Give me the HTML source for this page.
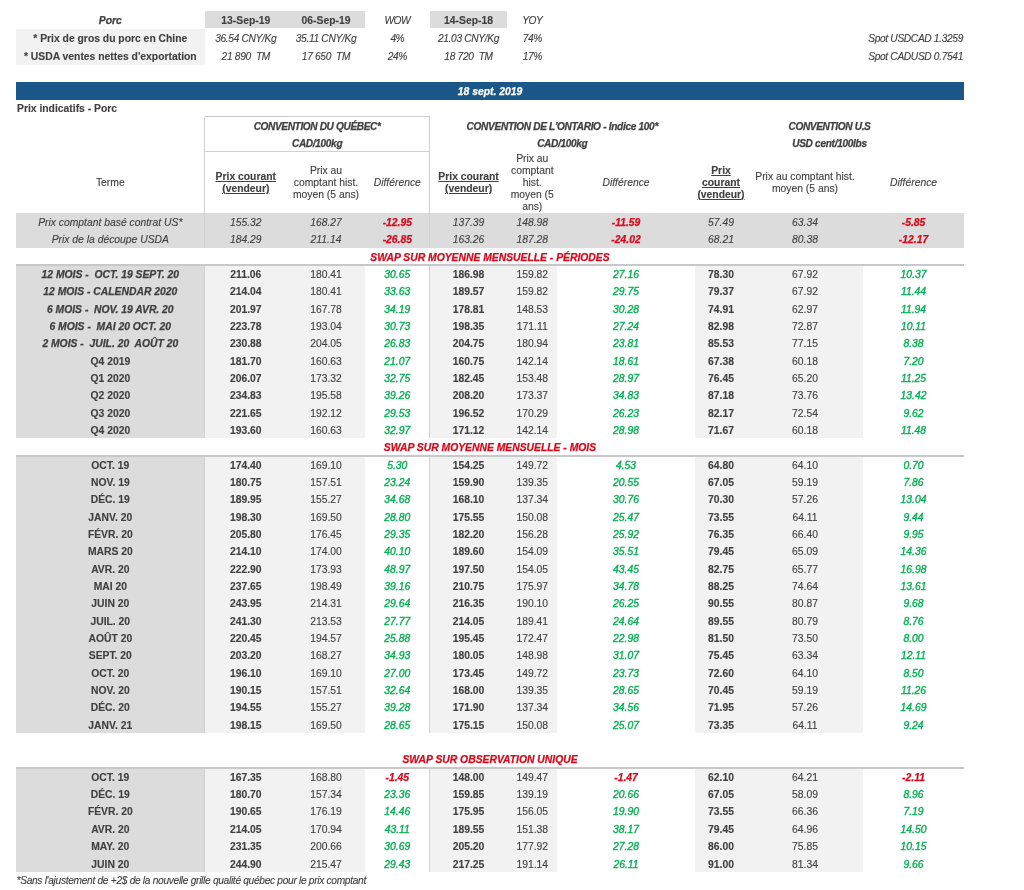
<!DOCTYPE html>
<html><head><meta charset="utf-8"><style>
html,body{margin:0;padding:0;background:#ffffff;}
body{width:1024px;height:890px;position:relative;overflow:hidden;font-family:"Liberation Sans",sans-serif;}
.t{position:absolute;line-height:14px;height:14px;white-space:pre;}
.s{-webkit-text-stroke:0.12px currentColor;}
.c{-webkit-text-stroke:0.35px currentColor;}
.bi{-webkit-text-stroke:0.25px currentColor;}
.bb{-webkit-text-stroke:0.12px currentColor;}
.r{position:absolute;}
#w{position:absolute;left:0;top:0;width:1024px;height:890px;will-change:transform;}
</style></head><body><div id="w">
<div class="r" style="left:204.60px;top:11.20px;width:160.40px;height:17.00px;background:#dcdcdc"></div>
<div class="r" style="left:429.60px;top:11.20px;width:77.90px;height:17.00px;background:#dcdcdc"></div>
<div class="r" style="left:16.00px;top:28.80px;width:188.60px;height:36.00px;background:#f2f2f2"></div>
<div class="t bi" style="left:16.00px;width:188.60px;top:13.81px;font-size:10.35px;font-weight:bold;font-style:italic;color:#404040;text-align:center;">Porc</div>
<div class="t bb" style="left:204.60px;width:82.40px;top:13.81px;font-size:10.35px;font-weight:bold;font-style:normal;color:#404040;text-align:center;">13-Sep-19</div>
<div class="t bb" style="left:287.00px;width:78.00px;top:13.81px;font-size:10.35px;font-weight:bold;font-style:normal;color:#404040;text-align:center;">06-Sep-19</div>
<div class="t s" style="left:365.00px;width:64.60px;top:13.86px;font-size:10.2px;font-weight:normal;font-style:italic;color:#404040;text-align:center;letter-spacing:-0.544px;">WOW</div>
<div class="t bb" style="left:429.60px;width:77.90px;top:13.81px;font-size:10.35px;font-weight:bold;font-style:normal;color:#404040;text-align:center;">14-Sep-18</div>
<div class="t s" style="left:507.50px;width:49.50px;top:13.86px;font-size:10.2px;font-weight:normal;font-style:italic;color:#404040;text-align:center;letter-spacing:-0.431px;">YOY</div>
<div class="t bb" style="left:16.00px;width:188.60px;top:31.81px;font-size:10.35px;font-weight:bold;font-style:normal;color:#404040;text-align:center;">* Prix de gros du porc en Chine</div>
<div class="t s" style="left:204.60px;width:82.40px;top:31.86px;font-size:10.2px;font-weight:normal;font-style:italic;color:#404040;text-align:center;letter-spacing:-0.326px;">36.54 CNY/Kg</div>
<div class="t s" style="left:287.00px;width:78.00px;top:31.86px;font-size:10.2px;font-weight:normal;font-style:italic;color:#404040;text-align:center;letter-spacing:-0.322px;">35.11 CNY/Kg</div>
<div class="t s" style="left:365.00px;width:64.60px;top:31.86px;font-size:10.2px;font-weight:normal;font-style:italic;color:#404040;text-align:center;letter-spacing:-0.442px;">4%</div>
<div class="t s" style="left:429.60px;width:77.90px;top:31.86px;font-size:10.2px;font-weight:normal;font-style:italic;color:#404040;text-align:center;letter-spacing:-0.326px;">21.03 CNY/Kg</div>
<div class="t s" style="left:507.50px;width:49.50px;top:31.86px;font-size:10.2px;font-weight:normal;font-style:italic;color:#404040;text-align:center;letter-spacing:-0.408px;">74%</div>
<div class="t s" style="left:700.00px;width:263.00px;top:31.86px;font-size:10.2px;font-weight:normal;font-style:italic;color:#404040;text-align:right;letter-spacing:-0.336px;">Spot USDCAD 1.3259</div>
<div class="t bb" style="left:6.00px;width:208.60px;top:49.81px;font-size:10.35px;font-weight:bold;font-style:normal;color:#404040;text-align:center;">* USDA ventes nettes d'exportation</div>
<div class="t s" style="left:204.60px;width:82.40px;top:49.86px;font-size:10.2px;font-weight:normal;font-style:italic;color:#404040;text-align:center;letter-spacing:-0.310px;">21 890  TM</div>
<div class="t s" style="left:287.00px;width:78.00px;top:49.86px;font-size:10.2px;font-weight:normal;font-style:italic;color:#404040;text-align:center;letter-spacing:-0.310px;">17 650  TM</div>
<div class="t s" style="left:365.00px;width:64.60px;top:49.86px;font-size:10.2px;font-weight:normal;font-style:italic;color:#404040;text-align:center;letter-spacing:-0.408px;">24%</div>
<div class="t s" style="left:429.60px;width:77.90px;top:49.86px;font-size:10.2px;font-weight:normal;font-style:italic;color:#404040;text-align:center;letter-spacing:-0.310px;">18 720  TM</div>
<div class="t s" style="left:507.50px;width:49.50px;top:49.86px;font-size:10.2px;font-weight:normal;font-style:italic;color:#404040;text-align:center;letter-spacing:-0.408px;">17%</div>
<div class="t s" style="left:700.00px;width:263.00px;top:49.86px;font-size:10.2px;font-weight:normal;font-style:italic;color:#404040;text-align:right;letter-spacing:-0.336px;">Spot CADUSD 0.7541</div>
<div class="r" style="left:16.00px;top:82.20px;width:948.00px;height:17.50px;background:#1b5789"></div>
<div class="t bi" style="left:16.00px;width:948.00px;top:84.91px;font-size:10.35px;font-weight:bold;font-style:italic;color:#ffffff;text-align:center;">18 sept. 2019</div>
<div class="t bb" style="left:17.00px;width:383.00px;top:102.11px;font-size:10.35px;font-weight:bold;font-style:normal;color:#404040;text-align:left;">Prix indicatifs - Porc</div>
<div class="t bi" style="left:204.60px;width:225.00px;top:119.80px;font-size:10.1px;font-weight:bold;font-style:italic;color:#404040;text-align:center;letter-spacing:-0.366px;">CONVENTION DU QUÉBEC*</div>
<div class="t bi" style="left:204.60px;width:225.00px;top:136.60px;font-size:10.1px;font-weight:bold;font-style:italic;color:#404040;text-align:center;letter-spacing:-0.338px;">CAD/100kg</div>
<div class="t bi" style="left:429.60px;width:265.40px;top:119.80px;font-size:10.1px;font-weight:bold;font-style:italic;color:#404040;text-align:center;letter-spacing:-0.313px;">CONVENTION DE L'ONTARIO - Indice 100*</div>
<div class="t bi" style="left:429.60px;width:265.40px;top:136.60px;font-size:10.1px;font-weight:bold;font-style:italic;color:#404040;text-align:center;letter-spacing:-0.338px;">CAD/100kg</div>
<div class="t bi" style="left:695.00px;width:269.00px;top:119.80px;font-size:10.1px;font-weight:bold;font-style:italic;color:#404040;text-align:center;letter-spacing:-0.354px;">CONVENTION U.S</div>
<div class="t bi" style="left:695.00px;width:269.00px;top:136.60px;font-size:10.1px;font-weight:bold;font-style:italic;color:#404040;text-align:center;letter-spacing:-0.301px;">USD cent/100lbs</div>
<div class="r" style="left:204.60px;top:116px;width:225.00px;height:1px;background:#d2d2d2"></div>
<div class="r" style="left:204.60px;top:116px;width:83.40px;height:1px;background:#c6c6c6"></div>
<div class="r" style="left:204.60px;top:151px;width:225.00px;height:1px;background:#d2d2d2"></div>
<div class="t s" style="left:16.00px;width:188.60px;top:176.01px;font-size:10.35px;font-weight:normal;font-style:normal;color:#404040;text-align:center;">Terme</div>
<div class="t bb" style="left:204.60px;width:82.40px;top:170.06px;font-size:10.35px;font-weight:bold;font-style:normal;color:#404040;text-align:center;text-decoration:underline;">Prix courant</div>
<div class="t bb" style="left:204.60px;width:82.40px;top:181.96px;font-size:10.35px;font-weight:bold;font-style:normal;color:#404040;text-align:center;text-decoration:underline;">(vendeur)</div>
<div class="t s" style="left:287.00px;width:78.00px;top:164.11px;font-size:10.35px;font-weight:normal;font-style:normal;color:#404040;text-align:center;">Prix au</div>
<div class="t s" style="left:287.00px;width:78.00px;top:176.01px;font-size:10.35px;font-weight:normal;font-style:normal;color:#404040;text-align:center;">comptant hist.</div>
<div class="t s" style="left:287.00px;width:78.00px;top:187.91px;font-size:10.35px;font-weight:normal;font-style:normal;color:#404040;text-align:center;">moyen (5 ans)</div>
<div class="t s" style="left:365.00px;width:64.60px;top:176.01px;font-size:10.35px;font-weight:normal;font-style:italic;color:#404040;text-align:center;">Différence</div>
<div class="t bb" style="left:429.60px;width:77.90px;top:170.06px;font-size:10.35px;font-weight:bold;font-style:normal;color:#404040;text-align:center;text-decoration:underline;">Prix courant</div>
<div class="t bb" style="left:429.60px;width:77.90px;top:181.96px;font-size:10.35px;font-weight:bold;font-style:normal;color:#404040;text-align:center;text-decoration:underline;">(vendeur)</div>
<div class="t s" style="left:507.50px;width:49.50px;top:152.21px;font-size:10.35px;font-weight:normal;font-style:normal;color:#404040;text-align:center;">Prix au</div>
<div class="t s" style="left:507.50px;width:49.50px;top:164.11px;font-size:10.35px;font-weight:normal;font-style:normal;color:#404040;text-align:center;">comptant</div>
<div class="t s" style="left:507.50px;width:49.50px;top:176.01px;font-size:10.35px;font-weight:normal;font-style:normal;color:#404040;text-align:center;">hist.</div>
<div class="t s" style="left:507.50px;width:49.50px;top:187.91px;font-size:10.35px;font-weight:normal;font-style:normal;color:#404040;text-align:center;">moyen (5</div>
<div class="t s" style="left:507.50px;width:49.50px;top:199.81px;font-size:10.35px;font-weight:normal;font-style:normal;color:#404040;text-align:center;">ans)</div>
<div class="t s" style="left:557.00px;width:138.00px;top:176.01px;font-size:10.35px;font-weight:normal;font-style:italic;color:#404040;text-align:center;">Différence</div>
<div class="t bb" style="left:695.00px;width:52.00px;top:164.11px;font-size:10.35px;font-weight:bold;font-style:normal;color:#404040;text-align:center;text-decoration:underline;">Prix</div>
<div class="t bb" style="left:695.00px;width:52.00px;top:176.01px;font-size:10.35px;font-weight:bold;font-style:normal;color:#404040;text-align:center;text-decoration:underline;">courant</div>
<div class="t bb" style="left:695.00px;width:52.00px;top:187.91px;font-size:10.35px;font-weight:bold;font-style:normal;color:#404040;text-align:center;text-decoration:underline;">(vendeur)</div>
<div class="t s" style="left:747.00px;width:116.00px;top:170.06px;font-size:10.35px;font-weight:normal;font-style:normal;color:#404040;text-align:center;">Prix au comptant hist.</div>
<div class="t s" style="left:747.00px;width:116.00px;top:181.96px;font-size:10.35px;font-weight:normal;font-style:normal;color:#404040;text-align:center;">moyen (5 ans)</div>
<div class="t s" style="left:863.00px;width:101.00px;top:176.01px;font-size:10.35px;font-weight:normal;font-style:italic;color:#404040;text-align:center;">Différence</div>
<div class="r" style="left:16.00px;top:213.40px;width:948.00px;height:34.30px;background:#dcdcdc"></div>
<div class="t s" style="left:16.00px;width:188.60px;top:216.11px;font-size:10.35px;font-weight:normal;font-style:italic;color:#404040;text-align:center;">Prix comptant basé contrat US*</div>
<div class="t s" style="left:204.60px;width:82.40px;top:216.11px;font-size:10.35px;font-weight:normal;font-style:italic;color:#404040;text-align:center;">155.32</div>
<div class="t s" style="left:287.00px;width:78.00px;top:216.11px;font-size:10.35px;font-weight:normal;font-style:italic;color:#404040;text-align:center;">168.27</div>
<div class="t bi" style="left:365.00px;width:64.60px;top:216.11px;font-size:10.35px;font-weight:bold;font-style:italic;color:#d60a1c;text-align:center;">-12.95</div>
<div class="t s" style="left:429.60px;width:77.90px;top:216.11px;font-size:10.35px;font-weight:normal;font-style:italic;color:#404040;text-align:center;">137.39</div>
<div class="t s" style="left:507.50px;width:49.50px;top:216.11px;font-size:10.35px;font-weight:normal;font-style:italic;color:#404040;text-align:center;">148.98</div>
<div class="t bi" style="left:557.00px;width:138.00px;top:216.11px;font-size:10.35px;font-weight:bold;font-style:italic;color:#d60a1c;text-align:center;">-11.59</div>
<div class="t s" style="left:695.00px;width:52.00px;top:216.11px;font-size:10.35px;font-weight:normal;font-style:italic;color:#404040;text-align:center;">57.49</div>
<div class="t s" style="left:747.00px;width:116.00px;top:216.11px;font-size:10.35px;font-weight:normal;font-style:italic;color:#404040;text-align:center;">63.34</div>
<div class="t bi" style="left:863.00px;width:101.00px;top:216.11px;font-size:10.35px;font-weight:bold;font-style:italic;color:#d60a1c;text-align:center;">-5.85</div>
<div class="t s" style="left:16.00px;width:188.60px;top:233.26px;font-size:10.35px;font-weight:normal;font-style:italic;color:#404040;text-align:center;">Prix de la découpe USDA</div>
<div class="t s" style="left:204.60px;width:82.40px;top:233.26px;font-size:10.35px;font-weight:normal;font-style:italic;color:#404040;text-align:center;">184.29</div>
<div class="t s" style="left:287.00px;width:78.00px;top:233.26px;font-size:10.35px;font-weight:normal;font-style:italic;color:#404040;text-align:center;">211.14</div>
<div class="t bi" style="left:365.00px;width:64.60px;top:233.26px;font-size:10.35px;font-weight:bold;font-style:italic;color:#d60a1c;text-align:center;">-26.85</div>
<div class="t s" style="left:429.60px;width:77.90px;top:233.26px;font-size:10.35px;font-weight:normal;font-style:italic;color:#404040;text-align:center;">163.26</div>
<div class="t s" style="left:507.50px;width:49.50px;top:233.26px;font-size:10.35px;font-weight:normal;font-style:italic;color:#404040;text-align:center;">187.28</div>
<div class="t bi" style="left:557.00px;width:138.00px;top:233.26px;font-size:10.35px;font-weight:bold;font-style:italic;color:#d60a1c;text-align:center;">-24.02</div>
<div class="t s" style="left:695.00px;width:52.00px;top:233.26px;font-size:10.35px;font-weight:normal;font-style:italic;color:#404040;text-align:center;">68.21</div>
<div class="t s" style="left:747.00px;width:116.00px;top:233.26px;font-size:10.35px;font-weight:normal;font-style:italic;color:#404040;text-align:center;">80.38</div>
<div class="t bi" style="left:863.00px;width:101.00px;top:233.26px;font-size:10.35px;font-weight:bold;font-style:italic;color:#d60a1c;text-align:center;">-12.17</div>
<div class="r" style="left:204px;top:117.00px;width:1px;height:130.70px;background:#d2d2d2"></div>
<div class="r" style="left:429px;top:117.00px;width:1px;height:130.70px;background:#d2d2d2"></div>
<div class="t bi" style="left:16.00px;width:948.00px;top:250.61px;font-size:10.35px;font-weight:bold;font-style:italic;color:#d60a1c;text-align:center;">SWAP SUR MOYENNE MENSUELLE - PÉRIODES</div>
<div class="r" style="left:16.00px;top:264.50px;width:188.60px;height:173.60px;background:#dcdcdc"></div>
<div class="r" style="left:204.60px;top:264.50px;width:160.40px;height:173.60px;background:#f2f2f2"></div>
<div class="r" style="left:429.60px;top:264.50px;width:127.40px;height:173.60px;background:#f2f2f2"></div>
<div class="r" style="left:695.00px;top:264.50px;width:168.00px;height:173.60px;background:#f2f2f2"></div>
<div class="r" style="left:204px;top:264.50px;width:1px;height:173.60px;background:#d2d2d2"></div>
<div class="r" style="left:429px;top:264.50px;width:1px;height:173.60px;background:#d2d2d2"></div>
<div class="r" style="left:16.00px;top:264.30px;width:948.00px;height:1.80px;background:#c8c8c8"></div>
<div class="t bi" style="left:16.00px;width:188.60px;top:267.91px;font-size:10.35px;font-weight:bold;font-style:italic;color:#404040;text-align:center;">12 MOIS -  OCT. 19 SEPT. 20</div>
<div class="t bb" style="left:204.60px;width:82.40px;top:267.91px;font-size:10.35px;font-weight:bold;font-style:normal;color:#404040;text-align:center;">211.06</div>
<div class="t s" style="left:287.00px;width:78.00px;top:267.91px;font-size:10.35px;font-weight:normal;font-style:normal;color:#404040;text-align:center;">180.41</div>
<div class="t c" style="left:365.00px;width:64.60px;top:267.91px;font-size:10.35px;font-weight:normal;font-style:italic;color:#00b050;text-align:center;">30.65</div>
<div class="t bb" style="left:429.60px;width:77.90px;top:267.91px;font-size:10.35px;font-weight:bold;font-style:normal;color:#404040;text-align:center;">186.98</div>
<div class="t s" style="left:507.50px;width:49.50px;top:267.91px;font-size:10.35px;font-weight:normal;font-style:normal;color:#404040;text-align:center;">159.82</div>
<div class="t c" style="left:557.00px;width:138.00px;top:267.91px;font-size:10.35px;font-weight:normal;font-style:italic;color:#00b050;text-align:center;">27.16</div>
<div class="t bb" style="left:695.00px;width:52.00px;top:267.91px;font-size:10.35px;font-weight:bold;font-style:normal;color:#404040;text-align:center;">78.30</div>
<div class="t s" style="left:747.00px;width:116.00px;top:267.91px;font-size:10.35px;font-weight:normal;font-style:normal;color:#404040;text-align:center;">67.92</div>
<div class="t c" style="left:863.00px;width:101.00px;top:267.91px;font-size:10.35px;font-weight:normal;font-style:italic;color:#00b050;text-align:center;">10.37</div>
<div class="t bi" style="left:16.00px;width:188.60px;top:285.27px;font-size:10.35px;font-weight:bold;font-style:italic;color:#404040;text-align:center;">12 MOIS - CALENDAR 2020</div>
<div class="t bb" style="left:204.60px;width:82.40px;top:285.27px;font-size:10.35px;font-weight:bold;font-style:normal;color:#404040;text-align:center;">214.04</div>
<div class="t s" style="left:287.00px;width:78.00px;top:285.27px;font-size:10.35px;font-weight:normal;font-style:normal;color:#404040;text-align:center;">180.41</div>
<div class="t c" style="left:365.00px;width:64.60px;top:285.27px;font-size:10.35px;font-weight:normal;font-style:italic;color:#00b050;text-align:center;">33.63</div>
<div class="t bb" style="left:429.60px;width:77.90px;top:285.27px;font-size:10.35px;font-weight:bold;font-style:normal;color:#404040;text-align:center;">189.57</div>
<div class="t s" style="left:507.50px;width:49.50px;top:285.27px;font-size:10.35px;font-weight:normal;font-style:normal;color:#404040;text-align:center;">159.82</div>
<div class="t c" style="left:557.00px;width:138.00px;top:285.27px;font-size:10.35px;font-weight:normal;font-style:italic;color:#00b050;text-align:center;">29.75</div>
<div class="t bb" style="left:695.00px;width:52.00px;top:285.27px;font-size:10.35px;font-weight:bold;font-style:normal;color:#404040;text-align:center;">79.37</div>
<div class="t s" style="left:747.00px;width:116.00px;top:285.27px;font-size:10.35px;font-weight:normal;font-style:normal;color:#404040;text-align:center;">67.92</div>
<div class="t c" style="left:863.00px;width:101.00px;top:285.27px;font-size:10.35px;font-weight:normal;font-style:italic;color:#00b050;text-align:center;">11.44</div>
<div class="t bi" style="left:16.00px;width:188.60px;top:302.63px;font-size:10.35px;font-weight:bold;font-style:italic;color:#404040;text-align:center;">6 MOIS -  NOV. 19 AVR. 20</div>
<div class="t bb" style="left:204.60px;width:82.40px;top:302.63px;font-size:10.35px;font-weight:bold;font-style:normal;color:#404040;text-align:center;">201.97</div>
<div class="t s" style="left:287.00px;width:78.00px;top:302.63px;font-size:10.35px;font-weight:normal;font-style:normal;color:#404040;text-align:center;">167.78</div>
<div class="t c" style="left:365.00px;width:64.60px;top:302.63px;font-size:10.35px;font-weight:normal;font-style:italic;color:#00b050;text-align:center;">34.19</div>
<div class="t bb" style="left:429.60px;width:77.90px;top:302.63px;font-size:10.35px;font-weight:bold;font-style:normal;color:#404040;text-align:center;">178.81</div>
<div class="t s" style="left:507.50px;width:49.50px;top:302.63px;font-size:10.35px;font-weight:normal;font-style:normal;color:#404040;text-align:center;">148.53</div>
<div class="t c" style="left:557.00px;width:138.00px;top:302.63px;font-size:10.35px;font-weight:normal;font-style:italic;color:#00b050;text-align:center;">30.28</div>
<div class="t bb" style="left:695.00px;width:52.00px;top:302.63px;font-size:10.35px;font-weight:bold;font-style:normal;color:#404040;text-align:center;">74.91</div>
<div class="t s" style="left:747.00px;width:116.00px;top:302.63px;font-size:10.35px;font-weight:normal;font-style:normal;color:#404040;text-align:center;">62.97</div>
<div class="t c" style="left:863.00px;width:101.00px;top:302.63px;font-size:10.35px;font-weight:normal;font-style:italic;color:#00b050;text-align:center;">11.94</div>
<div class="t bi" style="left:16.00px;width:188.60px;top:319.99px;font-size:10.35px;font-weight:bold;font-style:italic;color:#404040;text-align:center;">6 MOIS -  MAI 20 OCT. 20</div>
<div class="t bb" style="left:204.60px;width:82.40px;top:319.99px;font-size:10.35px;font-weight:bold;font-style:normal;color:#404040;text-align:center;">223.78</div>
<div class="t s" style="left:287.00px;width:78.00px;top:319.99px;font-size:10.35px;font-weight:normal;font-style:normal;color:#404040;text-align:center;">193.04</div>
<div class="t c" style="left:365.00px;width:64.60px;top:319.99px;font-size:10.35px;font-weight:normal;font-style:italic;color:#00b050;text-align:center;">30.73</div>
<div class="t bb" style="left:429.60px;width:77.90px;top:319.99px;font-size:10.35px;font-weight:bold;font-style:normal;color:#404040;text-align:center;">198.35</div>
<div class="t s" style="left:507.50px;width:49.50px;top:319.99px;font-size:10.35px;font-weight:normal;font-style:normal;color:#404040;text-align:center;">171.11</div>
<div class="t c" style="left:557.00px;width:138.00px;top:319.99px;font-size:10.35px;font-weight:normal;font-style:italic;color:#00b050;text-align:center;">27.24</div>
<div class="t bb" style="left:695.00px;width:52.00px;top:319.99px;font-size:10.35px;font-weight:bold;font-style:normal;color:#404040;text-align:center;">82.98</div>
<div class="t s" style="left:747.00px;width:116.00px;top:319.99px;font-size:10.35px;font-weight:normal;font-style:normal;color:#404040;text-align:center;">72.87</div>
<div class="t c" style="left:863.00px;width:101.00px;top:319.99px;font-size:10.35px;font-weight:normal;font-style:italic;color:#00b050;text-align:center;">10.11</div>
<div class="t bi" style="left:16.00px;width:188.60px;top:337.35px;font-size:10.35px;font-weight:bold;font-style:italic;color:#404040;text-align:center;">2 MOIS -  JUIL. 20  AOÛT 20</div>
<div class="t bb" style="left:204.60px;width:82.40px;top:337.35px;font-size:10.35px;font-weight:bold;font-style:normal;color:#404040;text-align:center;">230.88</div>
<div class="t s" style="left:287.00px;width:78.00px;top:337.35px;font-size:10.35px;font-weight:normal;font-style:normal;color:#404040;text-align:center;">204.05</div>
<div class="t c" style="left:365.00px;width:64.60px;top:337.35px;font-size:10.35px;font-weight:normal;font-style:italic;color:#00b050;text-align:center;">26.83</div>
<div class="t bb" style="left:429.60px;width:77.90px;top:337.35px;font-size:10.35px;font-weight:bold;font-style:normal;color:#404040;text-align:center;">204.75</div>
<div class="t s" style="left:507.50px;width:49.50px;top:337.35px;font-size:10.35px;font-weight:normal;font-style:normal;color:#404040;text-align:center;">180.94</div>
<div class="t c" style="left:557.00px;width:138.00px;top:337.35px;font-size:10.35px;font-weight:normal;font-style:italic;color:#00b050;text-align:center;">23.81</div>
<div class="t bb" style="left:695.00px;width:52.00px;top:337.35px;font-size:10.35px;font-weight:bold;font-style:normal;color:#404040;text-align:center;">85.53</div>
<div class="t s" style="left:747.00px;width:116.00px;top:337.35px;font-size:10.35px;font-weight:normal;font-style:normal;color:#404040;text-align:center;">77.15</div>
<div class="t c" style="left:863.00px;width:101.00px;top:337.35px;font-size:10.35px;font-weight:normal;font-style:italic;color:#00b050;text-align:center;">8.38</div>
<div class="t bb" style="left:16.00px;width:188.60px;top:354.71px;font-size:10.35px;font-weight:bold;font-style:normal;color:#404040;text-align:center;">Q4 2019</div>
<div class="t bb" style="left:204.60px;width:82.40px;top:354.71px;font-size:10.35px;font-weight:bold;font-style:normal;color:#404040;text-align:center;">181.70</div>
<div class="t s" style="left:287.00px;width:78.00px;top:354.71px;font-size:10.35px;font-weight:normal;font-style:normal;color:#404040;text-align:center;">160.63</div>
<div class="t c" style="left:365.00px;width:64.60px;top:354.71px;font-size:10.35px;font-weight:normal;font-style:italic;color:#00b050;text-align:center;">21.07</div>
<div class="t bb" style="left:429.60px;width:77.90px;top:354.71px;font-size:10.35px;font-weight:bold;font-style:normal;color:#404040;text-align:center;">160.75</div>
<div class="t s" style="left:507.50px;width:49.50px;top:354.71px;font-size:10.35px;font-weight:normal;font-style:normal;color:#404040;text-align:center;">142.14</div>
<div class="t c" style="left:557.00px;width:138.00px;top:354.71px;font-size:10.35px;font-weight:normal;font-style:italic;color:#00b050;text-align:center;">18.61</div>
<div class="t bb" style="left:695.00px;width:52.00px;top:354.71px;font-size:10.35px;font-weight:bold;font-style:normal;color:#404040;text-align:center;">67.38</div>
<div class="t s" style="left:747.00px;width:116.00px;top:354.71px;font-size:10.35px;font-weight:normal;font-style:normal;color:#404040;text-align:center;">60.18</div>
<div class="t c" style="left:863.00px;width:101.00px;top:354.71px;font-size:10.35px;font-weight:normal;font-style:italic;color:#00b050;text-align:center;">7.20</div>
<div class="t bb" style="left:16.00px;width:188.60px;top:372.07px;font-size:10.35px;font-weight:bold;font-style:normal;color:#404040;text-align:center;">Q1 2020</div>
<div class="t bb" style="left:204.60px;width:82.40px;top:372.07px;font-size:10.35px;font-weight:bold;font-style:normal;color:#404040;text-align:center;">206.07</div>
<div class="t s" style="left:287.00px;width:78.00px;top:372.07px;font-size:10.35px;font-weight:normal;font-style:normal;color:#404040;text-align:center;">173.32</div>
<div class="t c" style="left:365.00px;width:64.60px;top:372.07px;font-size:10.35px;font-weight:normal;font-style:italic;color:#00b050;text-align:center;">32.75</div>
<div class="t bb" style="left:429.60px;width:77.90px;top:372.07px;font-size:10.35px;font-weight:bold;font-style:normal;color:#404040;text-align:center;">182.45</div>
<div class="t s" style="left:507.50px;width:49.50px;top:372.07px;font-size:10.35px;font-weight:normal;font-style:normal;color:#404040;text-align:center;">153.48</div>
<div class="t c" style="left:557.00px;width:138.00px;top:372.07px;font-size:10.35px;font-weight:normal;font-style:italic;color:#00b050;text-align:center;">28.97</div>
<div class="t bb" style="left:695.00px;width:52.00px;top:372.07px;font-size:10.35px;font-weight:bold;font-style:normal;color:#404040;text-align:center;">76.45</div>
<div class="t s" style="left:747.00px;width:116.00px;top:372.07px;font-size:10.35px;font-weight:normal;font-style:normal;color:#404040;text-align:center;">65.20</div>
<div class="t c" style="left:863.00px;width:101.00px;top:372.07px;font-size:10.35px;font-weight:normal;font-style:italic;color:#00b050;text-align:center;">11.25</div>
<div class="t bb" style="left:16.00px;width:188.60px;top:389.43px;font-size:10.35px;font-weight:bold;font-style:normal;color:#404040;text-align:center;">Q2 2020</div>
<div class="t bb" style="left:204.60px;width:82.40px;top:389.43px;font-size:10.35px;font-weight:bold;font-style:normal;color:#404040;text-align:center;">234.83</div>
<div class="t s" style="left:287.00px;width:78.00px;top:389.43px;font-size:10.35px;font-weight:normal;font-style:normal;color:#404040;text-align:center;">195.58</div>
<div class="t c" style="left:365.00px;width:64.60px;top:389.43px;font-size:10.35px;font-weight:normal;font-style:italic;color:#00b050;text-align:center;">39.26</div>
<div class="t bb" style="left:429.60px;width:77.90px;top:389.43px;font-size:10.35px;font-weight:bold;font-style:normal;color:#404040;text-align:center;">208.20</div>
<div class="t s" style="left:507.50px;width:49.50px;top:389.43px;font-size:10.35px;font-weight:normal;font-style:normal;color:#404040;text-align:center;">173.37</div>
<div class="t c" style="left:557.00px;width:138.00px;top:389.43px;font-size:10.35px;font-weight:normal;font-style:italic;color:#00b050;text-align:center;">34.83</div>
<div class="t bb" style="left:695.00px;width:52.00px;top:389.43px;font-size:10.35px;font-weight:bold;font-style:normal;color:#404040;text-align:center;">87.18</div>
<div class="t s" style="left:747.00px;width:116.00px;top:389.43px;font-size:10.35px;font-weight:normal;font-style:normal;color:#404040;text-align:center;">73.76</div>
<div class="t c" style="left:863.00px;width:101.00px;top:389.43px;font-size:10.35px;font-weight:normal;font-style:italic;color:#00b050;text-align:center;">13.42</div>
<div class="t bb" style="left:16.00px;width:188.60px;top:406.79px;font-size:10.35px;font-weight:bold;font-style:normal;color:#404040;text-align:center;">Q3 2020</div>
<div class="t bb" style="left:204.60px;width:82.40px;top:406.79px;font-size:10.35px;font-weight:bold;font-style:normal;color:#404040;text-align:center;">221.65</div>
<div class="t s" style="left:287.00px;width:78.00px;top:406.79px;font-size:10.35px;font-weight:normal;font-style:normal;color:#404040;text-align:center;">192.12</div>
<div class="t c" style="left:365.00px;width:64.60px;top:406.79px;font-size:10.35px;font-weight:normal;font-style:italic;color:#00b050;text-align:center;">29.53</div>
<div class="t bb" style="left:429.60px;width:77.90px;top:406.79px;font-size:10.35px;font-weight:bold;font-style:normal;color:#404040;text-align:center;">196.52</div>
<div class="t s" style="left:507.50px;width:49.50px;top:406.79px;font-size:10.35px;font-weight:normal;font-style:normal;color:#404040;text-align:center;">170.29</div>
<div class="t c" style="left:557.00px;width:138.00px;top:406.79px;font-size:10.35px;font-weight:normal;font-style:italic;color:#00b050;text-align:center;">26.23</div>
<div class="t bb" style="left:695.00px;width:52.00px;top:406.79px;font-size:10.35px;font-weight:bold;font-style:normal;color:#404040;text-align:center;">82.17</div>
<div class="t s" style="left:747.00px;width:116.00px;top:406.79px;font-size:10.35px;font-weight:normal;font-style:normal;color:#404040;text-align:center;">72.54</div>
<div class="t c" style="left:863.00px;width:101.00px;top:406.79px;font-size:10.35px;font-weight:normal;font-style:italic;color:#00b050;text-align:center;">9.62</div>
<div class="t bb" style="left:16.00px;width:188.60px;top:424.15px;font-size:10.35px;font-weight:bold;font-style:normal;color:#404040;text-align:center;">Q4 2020</div>
<div class="t bb" style="left:204.60px;width:82.40px;top:424.15px;font-size:10.35px;font-weight:bold;font-style:normal;color:#404040;text-align:center;">193.60</div>
<div class="t s" style="left:287.00px;width:78.00px;top:424.15px;font-size:10.35px;font-weight:normal;font-style:normal;color:#404040;text-align:center;">160.63</div>
<div class="t c" style="left:365.00px;width:64.60px;top:424.15px;font-size:10.35px;font-weight:normal;font-style:italic;color:#00b050;text-align:center;">32.97</div>
<div class="t bb" style="left:429.60px;width:77.90px;top:424.15px;font-size:10.35px;font-weight:bold;font-style:normal;color:#404040;text-align:center;">171.12</div>
<div class="t s" style="left:507.50px;width:49.50px;top:424.15px;font-size:10.35px;font-weight:normal;font-style:normal;color:#404040;text-align:center;">142.14</div>
<div class="t c" style="left:557.00px;width:138.00px;top:424.15px;font-size:10.35px;font-weight:normal;font-style:italic;color:#00b050;text-align:center;">28.98</div>
<div class="t bb" style="left:695.00px;width:52.00px;top:424.15px;font-size:10.35px;font-weight:bold;font-style:normal;color:#404040;text-align:center;">71.67</div>
<div class="t s" style="left:747.00px;width:116.00px;top:424.15px;font-size:10.35px;font-weight:normal;font-style:normal;color:#404040;text-align:center;">60.18</div>
<div class="t c" style="left:863.00px;width:101.00px;top:424.15px;font-size:10.35px;font-weight:normal;font-style:italic;color:#00b050;text-align:center;">11.48</div>
<div class="t bi" style="left:16.00px;width:948.00px;top:441.11px;font-size:10.35px;font-weight:bold;font-style:italic;color:#d60a1c;text-align:center;">SWAP SUR MOYENNE MENSUELLE - MOIS</div>
<div class="r" style="left:16.00px;top:455.10px;width:188.60px;height:277.65px;background:#dcdcdc"></div>
<div class="r" style="left:204.60px;top:455.10px;width:160.40px;height:277.65px;background:#f2f2f2"></div>
<div class="r" style="left:429.60px;top:455.10px;width:127.40px;height:277.65px;background:#f2f2f2"></div>
<div class="r" style="left:695.00px;top:455.10px;width:168.00px;height:277.65px;background:#f2f2f2"></div>
<div class="r" style="left:204px;top:455.10px;width:1px;height:277.65px;background:#d2d2d2"></div>
<div class="r" style="left:429px;top:455.10px;width:1px;height:277.65px;background:#d2d2d2"></div>
<div class="r" style="left:16.00px;top:454.90px;width:948.00px;height:1.80px;background:#c8c8c8"></div>
<div class="t bb" style="left:16.00px;width:188.60px;top:458.51px;font-size:10.35px;font-weight:bold;font-style:normal;color:#404040;text-align:center;">OCT. 19</div>
<div class="t bb" style="left:204.60px;width:82.40px;top:458.51px;font-size:10.35px;font-weight:bold;font-style:normal;color:#404040;text-align:center;">174.40</div>
<div class="t s" style="left:287.00px;width:78.00px;top:458.51px;font-size:10.35px;font-weight:normal;font-style:normal;color:#404040;text-align:center;">169.10</div>
<div class="t c" style="left:365.00px;width:64.60px;top:458.51px;font-size:10.35px;font-weight:normal;font-style:italic;color:#00b050;text-align:center;">5.30</div>
<div class="t bb" style="left:429.60px;width:77.90px;top:458.51px;font-size:10.35px;font-weight:bold;font-style:normal;color:#404040;text-align:center;">154.25</div>
<div class="t s" style="left:507.50px;width:49.50px;top:458.51px;font-size:10.35px;font-weight:normal;font-style:normal;color:#404040;text-align:center;">149.72</div>
<div class="t c" style="left:557.00px;width:138.00px;top:458.51px;font-size:10.35px;font-weight:normal;font-style:italic;color:#00b050;text-align:center;">4.53</div>
<div class="t bb" style="left:695.00px;width:52.00px;top:458.51px;font-size:10.35px;font-weight:bold;font-style:normal;color:#404040;text-align:center;">64.80</div>
<div class="t s" style="left:747.00px;width:116.00px;top:458.51px;font-size:10.35px;font-weight:normal;font-style:normal;color:#404040;text-align:center;">64.10</div>
<div class="t c" style="left:863.00px;width:101.00px;top:458.51px;font-size:10.35px;font-weight:normal;font-style:italic;color:#00b050;text-align:center;">0.70</div>
<div class="t bb" style="left:16.00px;width:188.60px;top:475.86px;font-size:10.35px;font-weight:bold;font-style:normal;color:#404040;text-align:center;">NOV. 19</div>
<div class="t bb" style="left:204.60px;width:82.40px;top:475.86px;font-size:10.35px;font-weight:bold;font-style:normal;color:#404040;text-align:center;">180.75</div>
<div class="t s" style="left:287.00px;width:78.00px;top:475.86px;font-size:10.35px;font-weight:normal;font-style:normal;color:#404040;text-align:center;">157.51</div>
<div class="t c" style="left:365.00px;width:64.60px;top:475.86px;font-size:10.35px;font-weight:normal;font-style:italic;color:#00b050;text-align:center;">23.24</div>
<div class="t bb" style="left:429.60px;width:77.90px;top:475.86px;font-size:10.35px;font-weight:bold;font-style:normal;color:#404040;text-align:center;">159.90</div>
<div class="t s" style="left:507.50px;width:49.50px;top:475.86px;font-size:10.35px;font-weight:normal;font-style:normal;color:#404040;text-align:center;">139.35</div>
<div class="t c" style="left:557.00px;width:138.00px;top:475.86px;font-size:10.35px;font-weight:normal;font-style:italic;color:#00b050;text-align:center;">20.55</div>
<div class="t bb" style="left:695.00px;width:52.00px;top:475.86px;font-size:10.35px;font-weight:bold;font-style:normal;color:#404040;text-align:center;">67.05</div>
<div class="t s" style="left:747.00px;width:116.00px;top:475.86px;font-size:10.35px;font-weight:normal;font-style:normal;color:#404040;text-align:center;">59.19</div>
<div class="t c" style="left:863.00px;width:101.00px;top:475.86px;font-size:10.35px;font-weight:normal;font-style:italic;color:#00b050;text-align:center;">7.86</div>
<div class="t bb" style="left:16.00px;width:188.60px;top:493.22px;font-size:10.35px;font-weight:bold;font-style:normal;color:#404040;text-align:center;">DÉC. 19</div>
<div class="t bb" style="left:204.60px;width:82.40px;top:493.22px;font-size:10.35px;font-weight:bold;font-style:normal;color:#404040;text-align:center;">189.95</div>
<div class="t s" style="left:287.00px;width:78.00px;top:493.22px;font-size:10.35px;font-weight:normal;font-style:normal;color:#404040;text-align:center;">155.27</div>
<div class="t c" style="left:365.00px;width:64.60px;top:493.22px;font-size:10.35px;font-weight:normal;font-style:italic;color:#00b050;text-align:center;">34.68</div>
<div class="t bb" style="left:429.60px;width:77.90px;top:493.22px;font-size:10.35px;font-weight:bold;font-style:normal;color:#404040;text-align:center;">168.10</div>
<div class="t s" style="left:507.50px;width:49.50px;top:493.22px;font-size:10.35px;font-weight:normal;font-style:normal;color:#404040;text-align:center;">137.34</div>
<div class="t c" style="left:557.00px;width:138.00px;top:493.22px;font-size:10.35px;font-weight:normal;font-style:italic;color:#00b050;text-align:center;">30.76</div>
<div class="t bb" style="left:695.00px;width:52.00px;top:493.22px;font-size:10.35px;font-weight:bold;font-style:normal;color:#404040;text-align:center;">70.30</div>
<div class="t s" style="left:747.00px;width:116.00px;top:493.22px;font-size:10.35px;font-weight:normal;font-style:normal;color:#404040;text-align:center;">57.26</div>
<div class="t c" style="left:863.00px;width:101.00px;top:493.22px;font-size:10.35px;font-weight:normal;font-style:italic;color:#00b050;text-align:center;">13.04</div>
<div class="t bb" style="left:16.00px;width:188.60px;top:510.57px;font-size:10.35px;font-weight:bold;font-style:normal;color:#404040;text-align:center;">JANV. 20</div>
<div class="t bb" style="left:204.60px;width:82.40px;top:510.57px;font-size:10.35px;font-weight:bold;font-style:normal;color:#404040;text-align:center;">198.30</div>
<div class="t s" style="left:287.00px;width:78.00px;top:510.57px;font-size:10.35px;font-weight:normal;font-style:normal;color:#404040;text-align:center;">169.50</div>
<div class="t c" style="left:365.00px;width:64.60px;top:510.57px;font-size:10.35px;font-weight:normal;font-style:italic;color:#00b050;text-align:center;">28.80</div>
<div class="t bb" style="left:429.60px;width:77.90px;top:510.57px;font-size:10.35px;font-weight:bold;font-style:normal;color:#404040;text-align:center;">175.55</div>
<div class="t s" style="left:507.50px;width:49.50px;top:510.57px;font-size:10.35px;font-weight:normal;font-style:normal;color:#404040;text-align:center;">150.08</div>
<div class="t c" style="left:557.00px;width:138.00px;top:510.57px;font-size:10.35px;font-weight:normal;font-style:italic;color:#00b050;text-align:center;">25.47</div>
<div class="t bb" style="left:695.00px;width:52.00px;top:510.57px;font-size:10.35px;font-weight:bold;font-style:normal;color:#404040;text-align:center;">73.55</div>
<div class="t s" style="left:747.00px;width:116.00px;top:510.57px;font-size:10.35px;font-weight:normal;font-style:normal;color:#404040;text-align:center;">64.11</div>
<div class="t c" style="left:863.00px;width:101.00px;top:510.57px;font-size:10.35px;font-weight:normal;font-style:italic;color:#00b050;text-align:center;">9.44</div>
<div class="t bb" style="left:16.00px;width:188.60px;top:527.92px;font-size:10.35px;font-weight:bold;font-style:normal;color:#404040;text-align:center;">FÉVR. 20</div>
<div class="t bb" style="left:204.60px;width:82.40px;top:527.92px;font-size:10.35px;font-weight:bold;font-style:normal;color:#404040;text-align:center;">205.80</div>
<div class="t s" style="left:287.00px;width:78.00px;top:527.92px;font-size:10.35px;font-weight:normal;font-style:normal;color:#404040;text-align:center;">176.45</div>
<div class="t c" style="left:365.00px;width:64.60px;top:527.92px;font-size:10.35px;font-weight:normal;font-style:italic;color:#00b050;text-align:center;">29.35</div>
<div class="t bb" style="left:429.60px;width:77.90px;top:527.92px;font-size:10.35px;font-weight:bold;font-style:normal;color:#404040;text-align:center;">182.20</div>
<div class="t s" style="left:507.50px;width:49.50px;top:527.92px;font-size:10.35px;font-weight:normal;font-style:normal;color:#404040;text-align:center;">156.28</div>
<div class="t c" style="left:557.00px;width:138.00px;top:527.92px;font-size:10.35px;font-weight:normal;font-style:italic;color:#00b050;text-align:center;">25.92</div>
<div class="t bb" style="left:695.00px;width:52.00px;top:527.92px;font-size:10.35px;font-weight:bold;font-style:normal;color:#404040;text-align:center;">76.35</div>
<div class="t s" style="left:747.00px;width:116.00px;top:527.92px;font-size:10.35px;font-weight:normal;font-style:normal;color:#404040;text-align:center;">66.40</div>
<div class="t c" style="left:863.00px;width:101.00px;top:527.92px;font-size:10.35px;font-weight:normal;font-style:italic;color:#00b050;text-align:center;">9.95</div>
<div class="t bb" style="left:16.00px;width:188.60px;top:545.28px;font-size:10.35px;font-weight:bold;font-style:normal;color:#404040;text-align:center;">MARS 20</div>
<div class="t bb" style="left:204.60px;width:82.40px;top:545.28px;font-size:10.35px;font-weight:bold;font-style:normal;color:#404040;text-align:center;">214.10</div>
<div class="t s" style="left:287.00px;width:78.00px;top:545.28px;font-size:10.35px;font-weight:normal;font-style:normal;color:#404040;text-align:center;">174.00</div>
<div class="t c" style="left:365.00px;width:64.60px;top:545.28px;font-size:10.35px;font-weight:normal;font-style:italic;color:#00b050;text-align:center;">40.10</div>
<div class="t bb" style="left:429.60px;width:77.90px;top:545.28px;font-size:10.35px;font-weight:bold;font-style:normal;color:#404040;text-align:center;">189.60</div>
<div class="t s" style="left:507.50px;width:49.50px;top:545.28px;font-size:10.35px;font-weight:normal;font-style:normal;color:#404040;text-align:center;">154.09</div>
<div class="t c" style="left:557.00px;width:138.00px;top:545.28px;font-size:10.35px;font-weight:normal;font-style:italic;color:#00b050;text-align:center;">35.51</div>
<div class="t bb" style="left:695.00px;width:52.00px;top:545.28px;font-size:10.35px;font-weight:bold;font-style:normal;color:#404040;text-align:center;">79.45</div>
<div class="t s" style="left:747.00px;width:116.00px;top:545.28px;font-size:10.35px;font-weight:normal;font-style:normal;color:#404040;text-align:center;">65.09</div>
<div class="t c" style="left:863.00px;width:101.00px;top:545.28px;font-size:10.35px;font-weight:normal;font-style:italic;color:#00b050;text-align:center;">14.36</div>
<div class="t bb" style="left:16.00px;width:188.60px;top:562.63px;font-size:10.35px;font-weight:bold;font-style:normal;color:#404040;text-align:center;">AVR. 20</div>
<div class="t bb" style="left:204.60px;width:82.40px;top:562.63px;font-size:10.35px;font-weight:bold;font-style:normal;color:#404040;text-align:center;">222.90</div>
<div class="t s" style="left:287.00px;width:78.00px;top:562.63px;font-size:10.35px;font-weight:normal;font-style:normal;color:#404040;text-align:center;">173.93</div>
<div class="t c" style="left:365.00px;width:64.60px;top:562.63px;font-size:10.35px;font-weight:normal;font-style:italic;color:#00b050;text-align:center;">48.97</div>
<div class="t bb" style="left:429.60px;width:77.90px;top:562.63px;font-size:10.35px;font-weight:bold;font-style:normal;color:#404040;text-align:center;">197.50</div>
<div class="t s" style="left:507.50px;width:49.50px;top:562.63px;font-size:10.35px;font-weight:normal;font-style:normal;color:#404040;text-align:center;">154.05</div>
<div class="t c" style="left:557.00px;width:138.00px;top:562.63px;font-size:10.35px;font-weight:normal;font-style:italic;color:#00b050;text-align:center;">43.45</div>
<div class="t bb" style="left:695.00px;width:52.00px;top:562.63px;font-size:10.35px;font-weight:bold;font-style:normal;color:#404040;text-align:center;">82.75</div>
<div class="t s" style="left:747.00px;width:116.00px;top:562.63px;font-size:10.35px;font-weight:normal;font-style:normal;color:#404040;text-align:center;">65.77</div>
<div class="t c" style="left:863.00px;width:101.00px;top:562.63px;font-size:10.35px;font-weight:normal;font-style:italic;color:#00b050;text-align:center;">16.98</div>
<div class="t bb" style="left:16.00px;width:188.60px;top:579.98px;font-size:10.35px;font-weight:bold;font-style:normal;color:#404040;text-align:center;">MAI 20</div>
<div class="t bb" style="left:204.60px;width:82.40px;top:579.98px;font-size:10.35px;font-weight:bold;font-style:normal;color:#404040;text-align:center;">237.65</div>
<div class="t s" style="left:287.00px;width:78.00px;top:579.98px;font-size:10.35px;font-weight:normal;font-style:normal;color:#404040;text-align:center;">198.49</div>
<div class="t c" style="left:365.00px;width:64.60px;top:579.98px;font-size:10.35px;font-weight:normal;font-style:italic;color:#00b050;text-align:center;">39.16</div>
<div class="t bb" style="left:429.60px;width:77.90px;top:579.98px;font-size:10.35px;font-weight:bold;font-style:normal;color:#404040;text-align:center;">210.75</div>
<div class="t s" style="left:507.50px;width:49.50px;top:579.98px;font-size:10.35px;font-weight:normal;font-style:normal;color:#404040;text-align:center;">175.97</div>
<div class="t c" style="left:557.00px;width:138.00px;top:579.98px;font-size:10.35px;font-weight:normal;font-style:italic;color:#00b050;text-align:center;">34.78</div>
<div class="t bb" style="left:695.00px;width:52.00px;top:579.98px;font-size:10.35px;font-weight:bold;font-style:normal;color:#404040;text-align:center;">88.25</div>
<div class="t s" style="left:747.00px;width:116.00px;top:579.98px;font-size:10.35px;font-weight:normal;font-style:normal;color:#404040;text-align:center;">74.64</div>
<div class="t c" style="left:863.00px;width:101.00px;top:579.98px;font-size:10.35px;font-weight:normal;font-style:italic;color:#00b050;text-align:center;">13.61</div>
<div class="t bb" style="left:16.00px;width:188.60px;top:597.34px;font-size:10.35px;font-weight:bold;font-style:normal;color:#404040;text-align:center;">JUIN 20</div>
<div class="t bb" style="left:204.60px;width:82.40px;top:597.34px;font-size:10.35px;font-weight:bold;font-style:normal;color:#404040;text-align:center;">243.95</div>
<div class="t s" style="left:287.00px;width:78.00px;top:597.34px;font-size:10.35px;font-weight:normal;font-style:normal;color:#404040;text-align:center;">214.31</div>
<div class="t c" style="left:365.00px;width:64.60px;top:597.34px;font-size:10.35px;font-weight:normal;font-style:italic;color:#00b050;text-align:center;">29.64</div>
<div class="t bb" style="left:429.60px;width:77.90px;top:597.34px;font-size:10.35px;font-weight:bold;font-style:normal;color:#404040;text-align:center;">216.35</div>
<div class="t s" style="left:507.50px;width:49.50px;top:597.34px;font-size:10.35px;font-weight:normal;font-style:normal;color:#404040;text-align:center;">190.10</div>
<div class="t c" style="left:557.00px;width:138.00px;top:597.34px;font-size:10.35px;font-weight:normal;font-style:italic;color:#00b050;text-align:center;">26.25</div>
<div class="t bb" style="left:695.00px;width:52.00px;top:597.34px;font-size:10.35px;font-weight:bold;font-style:normal;color:#404040;text-align:center;">90.55</div>
<div class="t s" style="left:747.00px;width:116.00px;top:597.34px;font-size:10.35px;font-weight:normal;font-style:normal;color:#404040;text-align:center;">80.87</div>
<div class="t c" style="left:863.00px;width:101.00px;top:597.34px;font-size:10.35px;font-weight:normal;font-style:italic;color:#00b050;text-align:center;">9.68</div>
<div class="t bb" style="left:16.00px;width:188.60px;top:614.69px;font-size:10.35px;font-weight:bold;font-style:normal;color:#404040;text-align:center;">JUIL. 20</div>
<div class="t bb" style="left:204.60px;width:82.40px;top:614.69px;font-size:10.35px;font-weight:bold;font-style:normal;color:#404040;text-align:center;">241.30</div>
<div class="t s" style="left:287.00px;width:78.00px;top:614.69px;font-size:10.35px;font-weight:normal;font-style:normal;color:#404040;text-align:center;">213.53</div>
<div class="t c" style="left:365.00px;width:64.60px;top:614.69px;font-size:10.35px;font-weight:normal;font-style:italic;color:#00b050;text-align:center;">27.77</div>
<div class="t bb" style="left:429.60px;width:77.90px;top:614.69px;font-size:10.35px;font-weight:bold;font-style:normal;color:#404040;text-align:center;">214.05</div>
<div class="t s" style="left:507.50px;width:49.50px;top:614.69px;font-size:10.35px;font-weight:normal;font-style:normal;color:#404040;text-align:center;">189.41</div>
<div class="t c" style="left:557.00px;width:138.00px;top:614.69px;font-size:10.35px;font-weight:normal;font-style:italic;color:#00b050;text-align:center;">24.64</div>
<div class="t bb" style="left:695.00px;width:52.00px;top:614.69px;font-size:10.35px;font-weight:bold;font-style:normal;color:#404040;text-align:center;">89.55</div>
<div class="t s" style="left:747.00px;width:116.00px;top:614.69px;font-size:10.35px;font-weight:normal;font-style:normal;color:#404040;text-align:center;">80.79</div>
<div class="t c" style="left:863.00px;width:101.00px;top:614.69px;font-size:10.35px;font-weight:normal;font-style:italic;color:#00b050;text-align:center;">8.76</div>
<div class="t bb" style="left:16.00px;width:188.60px;top:632.04px;font-size:10.35px;font-weight:bold;font-style:normal;color:#404040;text-align:center;">AOÛT 20</div>
<div class="t bb" style="left:204.60px;width:82.40px;top:632.04px;font-size:10.35px;font-weight:bold;font-style:normal;color:#404040;text-align:center;">220.45</div>
<div class="t s" style="left:287.00px;width:78.00px;top:632.04px;font-size:10.35px;font-weight:normal;font-style:normal;color:#404040;text-align:center;">194.57</div>
<div class="t c" style="left:365.00px;width:64.60px;top:632.04px;font-size:10.35px;font-weight:normal;font-style:italic;color:#00b050;text-align:center;">25.88</div>
<div class="t bb" style="left:429.60px;width:77.90px;top:632.04px;font-size:10.35px;font-weight:bold;font-style:normal;color:#404040;text-align:center;">195.45</div>
<div class="t s" style="left:507.50px;width:49.50px;top:632.04px;font-size:10.35px;font-weight:normal;font-style:normal;color:#404040;text-align:center;">172.47</div>
<div class="t c" style="left:557.00px;width:138.00px;top:632.04px;font-size:10.35px;font-weight:normal;font-style:italic;color:#00b050;text-align:center;">22.98</div>
<div class="t bb" style="left:695.00px;width:52.00px;top:632.04px;font-size:10.35px;font-weight:bold;font-style:normal;color:#404040;text-align:center;">81.50</div>
<div class="t s" style="left:747.00px;width:116.00px;top:632.04px;font-size:10.35px;font-weight:normal;font-style:normal;color:#404040;text-align:center;">73.50</div>
<div class="t c" style="left:863.00px;width:101.00px;top:632.04px;font-size:10.35px;font-weight:normal;font-style:italic;color:#00b050;text-align:center;">8.00</div>
<div class="t bb" style="left:16.00px;width:188.60px;top:649.40px;font-size:10.35px;font-weight:bold;font-style:normal;color:#404040;text-align:center;">SEPT. 20</div>
<div class="t bb" style="left:204.60px;width:82.40px;top:649.40px;font-size:10.35px;font-weight:bold;font-style:normal;color:#404040;text-align:center;">203.20</div>
<div class="t s" style="left:287.00px;width:78.00px;top:649.40px;font-size:10.35px;font-weight:normal;font-style:normal;color:#404040;text-align:center;">168.27</div>
<div class="t c" style="left:365.00px;width:64.60px;top:649.40px;font-size:10.35px;font-weight:normal;font-style:italic;color:#00b050;text-align:center;">34.93</div>
<div class="t bb" style="left:429.60px;width:77.90px;top:649.40px;font-size:10.35px;font-weight:bold;font-style:normal;color:#404040;text-align:center;">180.05</div>
<div class="t s" style="left:507.50px;width:49.50px;top:649.40px;font-size:10.35px;font-weight:normal;font-style:normal;color:#404040;text-align:center;">148.98</div>
<div class="t c" style="left:557.00px;width:138.00px;top:649.40px;font-size:10.35px;font-weight:normal;font-style:italic;color:#00b050;text-align:center;">31.07</div>
<div class="t bb" style="left:695.00px;width:52.00px;top:649.40px;font-size:10.35px;font-weight:bold;font-style:normal;color:#404040;text-align:center;">75.45</div>
<div class="t s" style="left:747.00px;width:116.00px;top:649.40px;font-size:10.35px;font-weight:normal;font-style:normal;color:#404040;text-align:center;">63.34</div>
<div class="t c" style="left:863.00px;width:101.00px;top:649.40px;font-size:10.35px;font-weight:normal;font-style:italic;color:#00b050;text-align:center;">12.11</div>
<div class="t bb" style="left:16.00px;width:188.60px;top:666.75px;font-size:10.35px;font-weight:bold;font-style:normal;color:#404040;text-align:center;">OCT. 20</div>
<div class="t bb" style="left:204.60px;width:82.40px;top:666.75px;font-size:10.35px;font-weight:bold;font-style:normal;color:#404040;text-align:center;">196.10</div>
<div class="t s" style="left:287.00px;width:78.00px;top:666.75px;font-size:10.35px;font-weight:normal;font-style:normal;color:#404040;text-align:center;">169.10</div>
<div class="t c" style="left:365.00px;width:64.60px;top:666.75px;font-size:10.35px;font-weight:normal;font-style:italic;color:#00b050;text-align:center;">27.00</div>
<div class="t bb" style="left:429.60px;width:77.90px;top:666.75px;font-size:10.35px;font-weight:bold;font-style:normal;color:#404040;text-align:center;">173.45</div>
<div class="t s" style="left:507.50px;width:49.50px;top:666.75px;font-size:10.35px;font-weight:normal;font-style:normal;color:#404040;text-align:center;">149.72</div>
<div class="t c" style="left:557.00px;width:138.00px;top:666.75px;font-size:10.35px;font-weight:normal;font-style:italic;color:#00b050;text-align:center;">23.73</div>
<div class="t bb" style="left:695.00px;width:52.00px;top:666.75px;font-size:10.35px;font-weight:bold;font-style:normal;color:#404040;text-align:center;">72.60</div>
<div class="t s" style="left:747.00px;width:116.00px;top:666.75px;font-size:10.35px;font-weight:normal;font-style:normal;color:#404040;text-align:center;">64.10</div>
<div class="t c" style="left:863.00px;width:101.00px;top:666.75px;font-size:10.35px;font-weight:normal;font-style:italic;color:#00b050;text-align:center;">8.50</div>
<div class="t bb" style="left:16.00px;width:188.60px;top:684.10px;font-size:10.35px;font-weight:bold;font-style:normal;color:#404040;text-align:center;">NOV. 20</div>
<div class="t bb" style="left:204.60px;width:82.40px;top:684.10px;font-size:10.35px;font-weight:bold;font-style:normal;color:#404040;text-align:center;">190.15</div>
<div class="t s" style="left:287.00px;width:78.00px;top:684.10px;font-size:10.35px;font-weight:normal;font-style:normal;color:#404040;text-align:center;">157.51</div>
<div class="t c" style="left:365.00px;width:64.60px;top:684.10px;font-size:10.35px;font-weight:normal;font-style:italic;color:#00b050;text-align:center;">32.64</div>
<div class="t bb" style="left:429.60px;width:77.90px;top:684.10px;font-size:10.35px;font-weight:bold;font-style:normal;color:#404040;text-align:center;">168.00</div>
<div class="t s" style="left:507.50px;width:49.50px;top:684.10px;font-size:10.35px;font-weight:normal;font-style:normal;color:#404040;text-align:center;">139.35</div>
<div class="t c" style="left:557.00px;width:138.00px;top:684.10px;font-size:10.35px;font-weight:normal;font-style:italic;color:#00b050;text-align:center;">28.65</div>
<div class="t bb" style="left:695.00px;width:52.00px;top:684.10px;font-size:10.35px;font-weight:bold;font-style:normal;color:#404040;text-align:center;">70.45</div>
<div class="t s" style="left:747.00px;width:116.00px;top:684.10px;font-size:10.35px;font-weight:normal;font-style:normal;color:#404040;text-align:center;">59.19</div>
<div class="t c" style="left:863.00px;width:101.00px;top:684.10px;font-size:10.35px;font-weight:normal;font-style:italic;color:#00b050;text-align:center;">11.26</div>
<div class="t bb" style="left:16.00px;width:188.60px;top:701.46px;font-size:10.35px;font-weight:bold;font-style:normal;color:#404040;text-align:center;">DÉC. 20</div>
<div class="t bb" style="left:204.60px;width:82.40px;top:701.46px;font-size:10.35px;font-weight:bold;font-style:normal;color:#404040;text-align:center;">194.55</div>
<div class="t s" style="left:287.00px;width:78.00px;top:701.46px;font-size:10.35px;font-weight:normal;font-style:normal;color:#404040;text-align:center;">155.27</div>
<div class="t c" style="left:365.00px;width:64.60px;top:701.46px;font-size:10.35px;font-weight:normal;font-style:italic;color:#00b050;text-align:center;">39.28</div>
<div class="t bb" style="left:429.60px;width:77.90px;top:701.46px;font-size:10.35px;font-weight:bold;font-style:normal;color:#404040;text-align:center;">171.90</div>
<div class="t s" style="left:507.50px;width:49.50px;top:701.46px;font-size:10.35px;font-weight:normal;font-style:normal;color:#404040;text-align:center;">137.34</div>
<div class="t c" style="left:557.00px;width:138.00px;top:701.46px;font-size:10.35px;font-weight:normal;font-style:italic;color:#00b050;text-align:center;">34.56</div>
<div class="t bb" style="left:695.00px;width:52.00px;top:701.46px;font-size:10.35px;font-weight:bold;font-style:normal;color:#404040;text-align:center;">71.95</div>
<div class="t s" style="left:747.00px;width:116.00px;top:701.46px;font-size:10.35px;font-weight:normal;font-style:normal;color:#404040;text-align:center;">57.26</div>
<div class="t c" style="left:863.00px;width:101.00px;top:701.46px;font-size:10.35px;font-weight:normal;font-style:italic;color:#00b050;text-align:center;">14.69</div>
<div class="t bb" style="left:16.00px;width:188.60px;top:718.81px;font-size:10.35px;font-weight:bold;font-style:normal;color:#404040;text-align:center;">JANV. 21</div>
<div class="t bb" style="left:204.60px;width:82.40px;top:718.81px;font-size:10.35px;font-weight:bold;font-style:normal;color:#404040;text-align:center;">198.15</div>
<div class="t s" style="left:287.00px;width:78.00px;top:718.81px;font-size:10.35px;font-weight:normal;font-style:normal;color:#404040;text-align:center;">169.50</div>
<div class="t c" style="left:365.00px;width:64.60px;top:718.81px;font-size:10.35px;font-weight:normal;font-style:italic;color:#00b050;text-align:center;">28.65</div>
<div class="t bb" style="left:429.60px;width:77.90px;top:718.81px;font-size:10.35px;font-weight:bold;font-style:normal;color:#404040;text-align:center;">175.15</div>
<div class="t s" style="left:507.50px;width:49.50px;top:718.81px;font-size:10.35px;font-weight:normal;font-style:normal;color:#404040;text-align:center;">150.08</div>
<div class="t c" style="left:557.00px;width:138.00px;top:718.81px;font-size:10.35px;font-weight:normal;font-style:italic;color:#00b050;text-align:center;">25.07</div>
<div class="t bb" style="left:695.00px;width:52.00px;top:718.81px;font-size:10.35px;font-weight:bold;font-style:normal;color:#404040;text-align:center;">73.35</div>
<div class="t s" style="left:747.00px;width:116.00px;top:718.81px;font-size:10.35px;font-weight:normal;font-style:normal;color:#404040;text-align:center;">64.11</div>
<div class="t c" style="left:863.00px;width:101.00px;top:718.81px;font-size:10.35px;font-weight:normal;font-style:italic;color:#00b050;text-align:center;">9.24</div>
<div class="t bi" style="left:16.00px;width:948.00px;top:753.01px;font-size:10.35px;font-weight:bold;font-style:italic;color:#d60a1c;text-align:center;">SWAP SUR OBSERVATION UNIQUE</div>
<div class="r" style="left:16.00px;top:767.10px;width:188.60px;height:104.50px;background:#dcdcdc"></div>
<div class="r" style="left:204.60px;top:767.10px;width:160.40px;height:104.50px;background:#f2f2f2"></div>
<div class="r" style="left:429.60px;top:767.10px;width:127.40px;height:104.50px;background:#f2f2f2"></div>
<div class="r" style="left:695.00px;top:767.10px;width:168.00px;height:104.50px;background:#f2f2f2"></div>
<div class="r" style="left:204px;top:767.10px;width:1px;height:104.50px;background:#d2d2d2"></div>
<div class="r" style="left:429px;top:767.10px;width:1px;height:104.50px;background:#d2d2d2"></div>
<div class="r" style="left:16.00px;top:766.90px;width:948.00px;height:1.80px;background:#c8c8c8"></div>
<div class="t bb" style="left:16.00px;width:188.60px;top:770.51px;font-size:10.35px;font-weight:bold;font-style:normal;color:#404040;text-align:center;">OCT. 19</div>
<div class="t bb" style="left:204.60px;width:82.40px;top:770.51px;font-size:10.35px;font-weight:bold;font-style:normal;color:#404040;text-align:center;">167.35</div>
<div class="t s" style="left:287.00px;width:78.00px;top:770.51px;font-size:10.35px;font-weight:normal;font-style:normal;color:#404040;text-align:center;">168.80</div>
<div class="t bi" style="left:365.00px;width:64.60px;top:770.51px;font-size:10.35px;font-weight:bold;font-style:italic;color:#d60a1c;text-align:center;">-1.45</div>
<div class="t bb" style="left:429.60px;width:77.90px;top:770.51px;font-size:10.35px;font-weight:bold;font-style:normal;color:#404040;text-align:center;">148.00</div>
<div class="t s" style="left:507.50px;width:49.50px;top:770.51px;font-size:10.35px;font-weight:normal;font-style:normal;color:#404040;text-align:center;">149.47</div>
<div class="t bi" style="left:557.00px;width:138.00px;top:770.51px;font-size:10.35px;font-weight:bold;font-style:italic;color:#d60a1c;text-align:center;">-1.47</div>
<div class="t bb" style="left:695.00px;width:52.00px;top:770.51px;font-size:10.35px;font-weight:bold;font-style:normal;color:#404040;text-align:center;">62.10</div>
<div class="t s" style="left:747.00px;width:116.00px;top:770.51px;font-size:10.35px;font-weight:normal;font-style:normal;color:#404040;text-align:center;">64.21</div>
<div class="t bi" style="left:863.00px;width:101.00px;top:770.51px;font-size:10.35px;font-weight:bold;font-style:italic;color:#d60a1c;text-align:center;">-2.11</div>
<div class="t bb" style="left:16.00px;width:188.60px;top:787.93px;font-size:10.35px;font-weight:bold;font-style:normal;color:#404040;text-align:center;">DÉC. 19</div>
<div class="t bb" style="left:204.60px;width:82.40px;top:787.93px;font-size:10.35px;font-weight:bold;font-style:normal;color:#404040;text-align:center;">180.70</div>
<div class="t s" style="left:287.00px;width:78.00px;top:787.93px;font-size:10.35px;font-weight:normal;font-style:normal;color:#404040;text-align:center;">157.34</div>
<div class="t c" style="left:365.00px;width:64.60px;top:787.93px;font-size:10.35px;font-weight:normal;font-style:italic;color:#00b050;text-align:center;">23.36</div>
<div class="t bb" style="left:429.60px;width:77.90px;top:787.93px;font-size:10.35px;font-weight:bold;font-style:normal;color:#404040;text-align:center;">159.85</div>
<div class="t s" style="left:507.50px;width:49.50px;top:787.93px;font-size:10.35px;font-weight:normal;font-style:normal;color:#404040;text-align:center;">139.19</div>
<div class="t c" style="left:557.00px;width:138.00px;top:787.93px;font-size:10.35px;font-weight:normal;font-style:italic;color:#00b050;text-align:center;">20.66</div>
<div class="t bb" style="left:695.00px;width:52.00px;top:787.93px;font-size:10.35px;font-weight:bold;font-style:normal;color:#404040;text-align:center;">67.05</div>
<div class="t s" style="left:747.00px;width:116.00px;top:787.93px;font-size:10.35px;font-weight:normal;font-style:normal;color:#404040;text-align:center;">58.09</div>
<div class="t c" style="left:863.00px;width:101.00px;top:787.93px;font-size:10.35px;font-weight:normal;font-style:italic;color:#00b050;text-align:center;">8.96</div>
<div class="t bb" style="left:16.00px;width:188.60px;top:805.35px;font-size:10.35px;font-weight:bold;font-style:normal;color:#404040;text-align:center;">FÉVR. 20</div>
<div class="t bb" style="left:204.60px;width:82.40px;top:805.35px;font-size:10.35px;font-weight:bold;font-style:normal;color:#404040;text-align:center;">190.65</div>
<div class="t s" style="left:287.00px;width:78.00px;top:805.35px;font-size:10.35px;font-weight:normal;font-style:normal;color:#404040;text-align:center;">176.19</div>
<div class="t c" style="left:365.00px;width:64.60px;top:805.35px;font-size:10.35px;font-weight:normal;font-style:italic;color:#00b050;text-align:center;">14.46</div>
<div class="t bb" style="left:429.60px;width:77.90px;top:805.35px;font-size:10.35px;font-weight:bold;font-style:normal;color:#404040;text-align:center;">175.95</div>
<div class="t s" style="left:507.50px;width:49.50px;top:805.35px;font-size:10.35px;font-weight:normal;font-style:normal;color:#404040;text-align:center;">156.05</div>
<div class="t c" style="left:557.00px;width:138.00px;top:805.35px;font-size:10.35px;font-weight:normal;font-style:italic;color:#00b050;text-align:center;">19.90</div>
<div class="t bb" style="left:695.00px;width:52.00px;top:805.35px;font-size:10.35px;font-weight:bold;font-style:normal;color:#404040;text-align:center;">73.55</div>
<div class="t s" style="left:747.00px;width:116.00px;top:805.35px;font-size:10.35px;font-weight:normal;font-style:normal;color:#404040;text-align:center;">66.36</div>
<div class="t c" style="left:863.00px;width:101.00px;top:805.35px;font-size:10.35px;font-weight:normal;font-style:italic;color:#00b050;text-align:center;">7.19</div>
<div class="t bb" style="left:16.00px;width:188.60px;top:822.76px;font-size:10.35px;font-weight:bold;font-style:normal;color:#404040;text-align:center;">AVR. 20</div>
<div class="t bb" style="left:204.60px;width:82.40px;top:822.76px;font-size:10.35px;font-weight:bold;font-style:normal;color:#404040;text-align:center;">214.05</div>
<div class="t s" style="left:287.00px;width:78.00px;top:822.76px;font-size:10.35px;font-weight:normal;font-style:normal;color:#404040;text-align:center;">170.94</div>
<div class="t c" style="left:365.00px;width:64.60px;top:822.76px;font-size:10.35px;font-weight:normal;font-style:italic;color:#00b050;text-align:center;">43.11</div>
<div class="t bb" style="left:429.60px;width:77.90px;top:822.76px;font-size:10.35px;font-weight:bold;font-style:normal;color:#404040;text-align:center;">189.55</div>
<div class="t s" style="left:507.50px;width:49.50px;top:822.76px;font-size:10.35px;font-weight:normal;font-style:normal;color:#404040;text-align:center;">151.38</div>
<div class="t c" style="left:557.00px;width:138.00px;top:822.76px;font-size:10.35px;font-weight:normal;font-style:italic;color:#00b050;text-align:center;">38.17</div>
<div class="t bb" style="left:695.00px;width:52.00px;top:822.76px;font-size:10.35px;font-weight:bold;font-style:normal;color:#404040;text-align:center;">79.45</div>
<div class="t s" style="left:747.00px;width:116.00px;top:822.76px;font-size:10.35px;font-weight:normal;font-style:normal;color:#404040;text-align:center;">64.96</div>
<div class="t c" style="left:863.00px;width:101.00px;top:822.76px;font-size:10.35px;font-weight:normal;font-style:italic;color:#00b050;text-align:center;">14.50</div>
<div class="t bb" style="left:16.00px;width:188.60px;top:840.18px;font-size:10.35px;font-weight:bold;font-style:normal;color:#404040;text-align:center;">MAY. 20</div>
<div class="t bb" style="left:204.60px;width:82.40px;top:840.18px;font-size:10.35px;font-weight:bold;font-style:normal;color:#404040;text-align:center;">231.35</div>
<div class="t s" style="left:287.00px;width:78.00px;top:840.18px;font-size:10.35px;font-weight:normal;font-style:normal;color:#404040;text-align:center;">200.66</div>
<div class="t c" style="left:365.00px;width:64.60px;top:840.18px;font-size:10.35px;font-weight:normal;font-style:italic;color:#00b050;text-align:center;">30.69</div>
<div class="t bb" style="left:429.60px;width:77.90px;top:840.18px;font-size:10.35px;font-weight:bold;font-style:normal;color:#404040;text-align:center;">205.20</div>
<div class="t s" style="left:507.50px;width:49.50px;top:840.18px;font-size:10.35px;font-weight:normal;font-style:normal;color:#404040;text-align:center;">177.92</div>
<div class="t c" style="left:557.00px;width:138.00px;top:840.18px;font-size:10.35px;font-weight:normal;font-style:italic;color:#00b050;text-align:center;">27.28</div>
<div class="t bb" style="left:695.00px;width:52.00px;top:840.18px;font-size:10.35px;font-weight:bold;font-style:normal;color:#404040;text-align:center;">86.00</div>
<div class="t s" style="left:747.00px;width:116.00px;top:840.18px;font-size:10.35px;font-weight:normal;font-style:normal;color:#404040;text-align:center;">75.85</div>
<div class="t c" style="left:863.00px;width:101.00px;top:840.18px;font-size:10.35px;font-weight:normal;font-style:italic;color:#00b050;text-align:center;">10.15</div>
<div class="t bb" style="left:16.00px;width:188.60px;top:857.60px;font-size:10.35px;font-weight:bold;font-style:normal;color:#404040;text-align:center;">JUIN 20</div>
<div class="t bb" style="left:204.60px;width:82.40px;top:857.60px;font-size:10.35px;font-weight:bold;font-style:normal;color:#404040;text-align:center;">244.90</div>
<div class="t s" style="left:287.00px;width:78.00px;top:857.60px;font-size:10.35px;font-weight:normal;font-style:normal;color:#404040;text-align:center;">215.47</div>
<div class="t c" style="left:365.00px;width:64.60px;top:857.60px;font-size:10.35px;font-weight:normal;font-style:italic;color:#00b050;text-align:center;">29.43</div>
<div class="t bb" style="left:429.60px;width:77.90px;top:857.60px;font-size:10.35px;font-weight:bold;font-style:normal;color:#404040;text-align:center;">217.25</div>
<div class="t s" style="left:507.50px;width:49.50px;top:857.60px;font-size:10.35px;font-weight:normal;font-style:normal;color:#404040;text-align:center;">191.14</div>
<div class="t c" style="left:557.00px;width:138.00px;top:857.60px;font-size:10.35px;font-weight:normal;font-style:italic;color:#00b050;text-align:center;">26.11</div>
<div class="t bb" style="left:695.00px;width:52.00px;top:857.60px;font-size:10.35px;font-weight:bold;font-style:normal;color:#404040;text-align:center;">91.00</div>
<div class="t s" style="left:747.00px;width:116.00px;top:857.60px;font-size:10.35px;font-weight:normal;font-style:normal;color:#404040;text-align:center;">81.34</div>
<div class="t c" style="left:863.00px;width:101.00px;top:857.60px;font-size:10.35px;font-weight:normal;font-style:italic;color:#00b050;text-align:center;">9.66</div>
<div class="t s" style="left:16.50px;width:583.50px;top:874.26px;font-size:10.2px;font-weight:normal;font-style:italic;color:#404040;text-align:left;letter-spacing:-0.309px;">*Sans l'ajustement de +2$ de la nouvelle grille qualité québec pour le prix comptant</div>
</div></body></html>
